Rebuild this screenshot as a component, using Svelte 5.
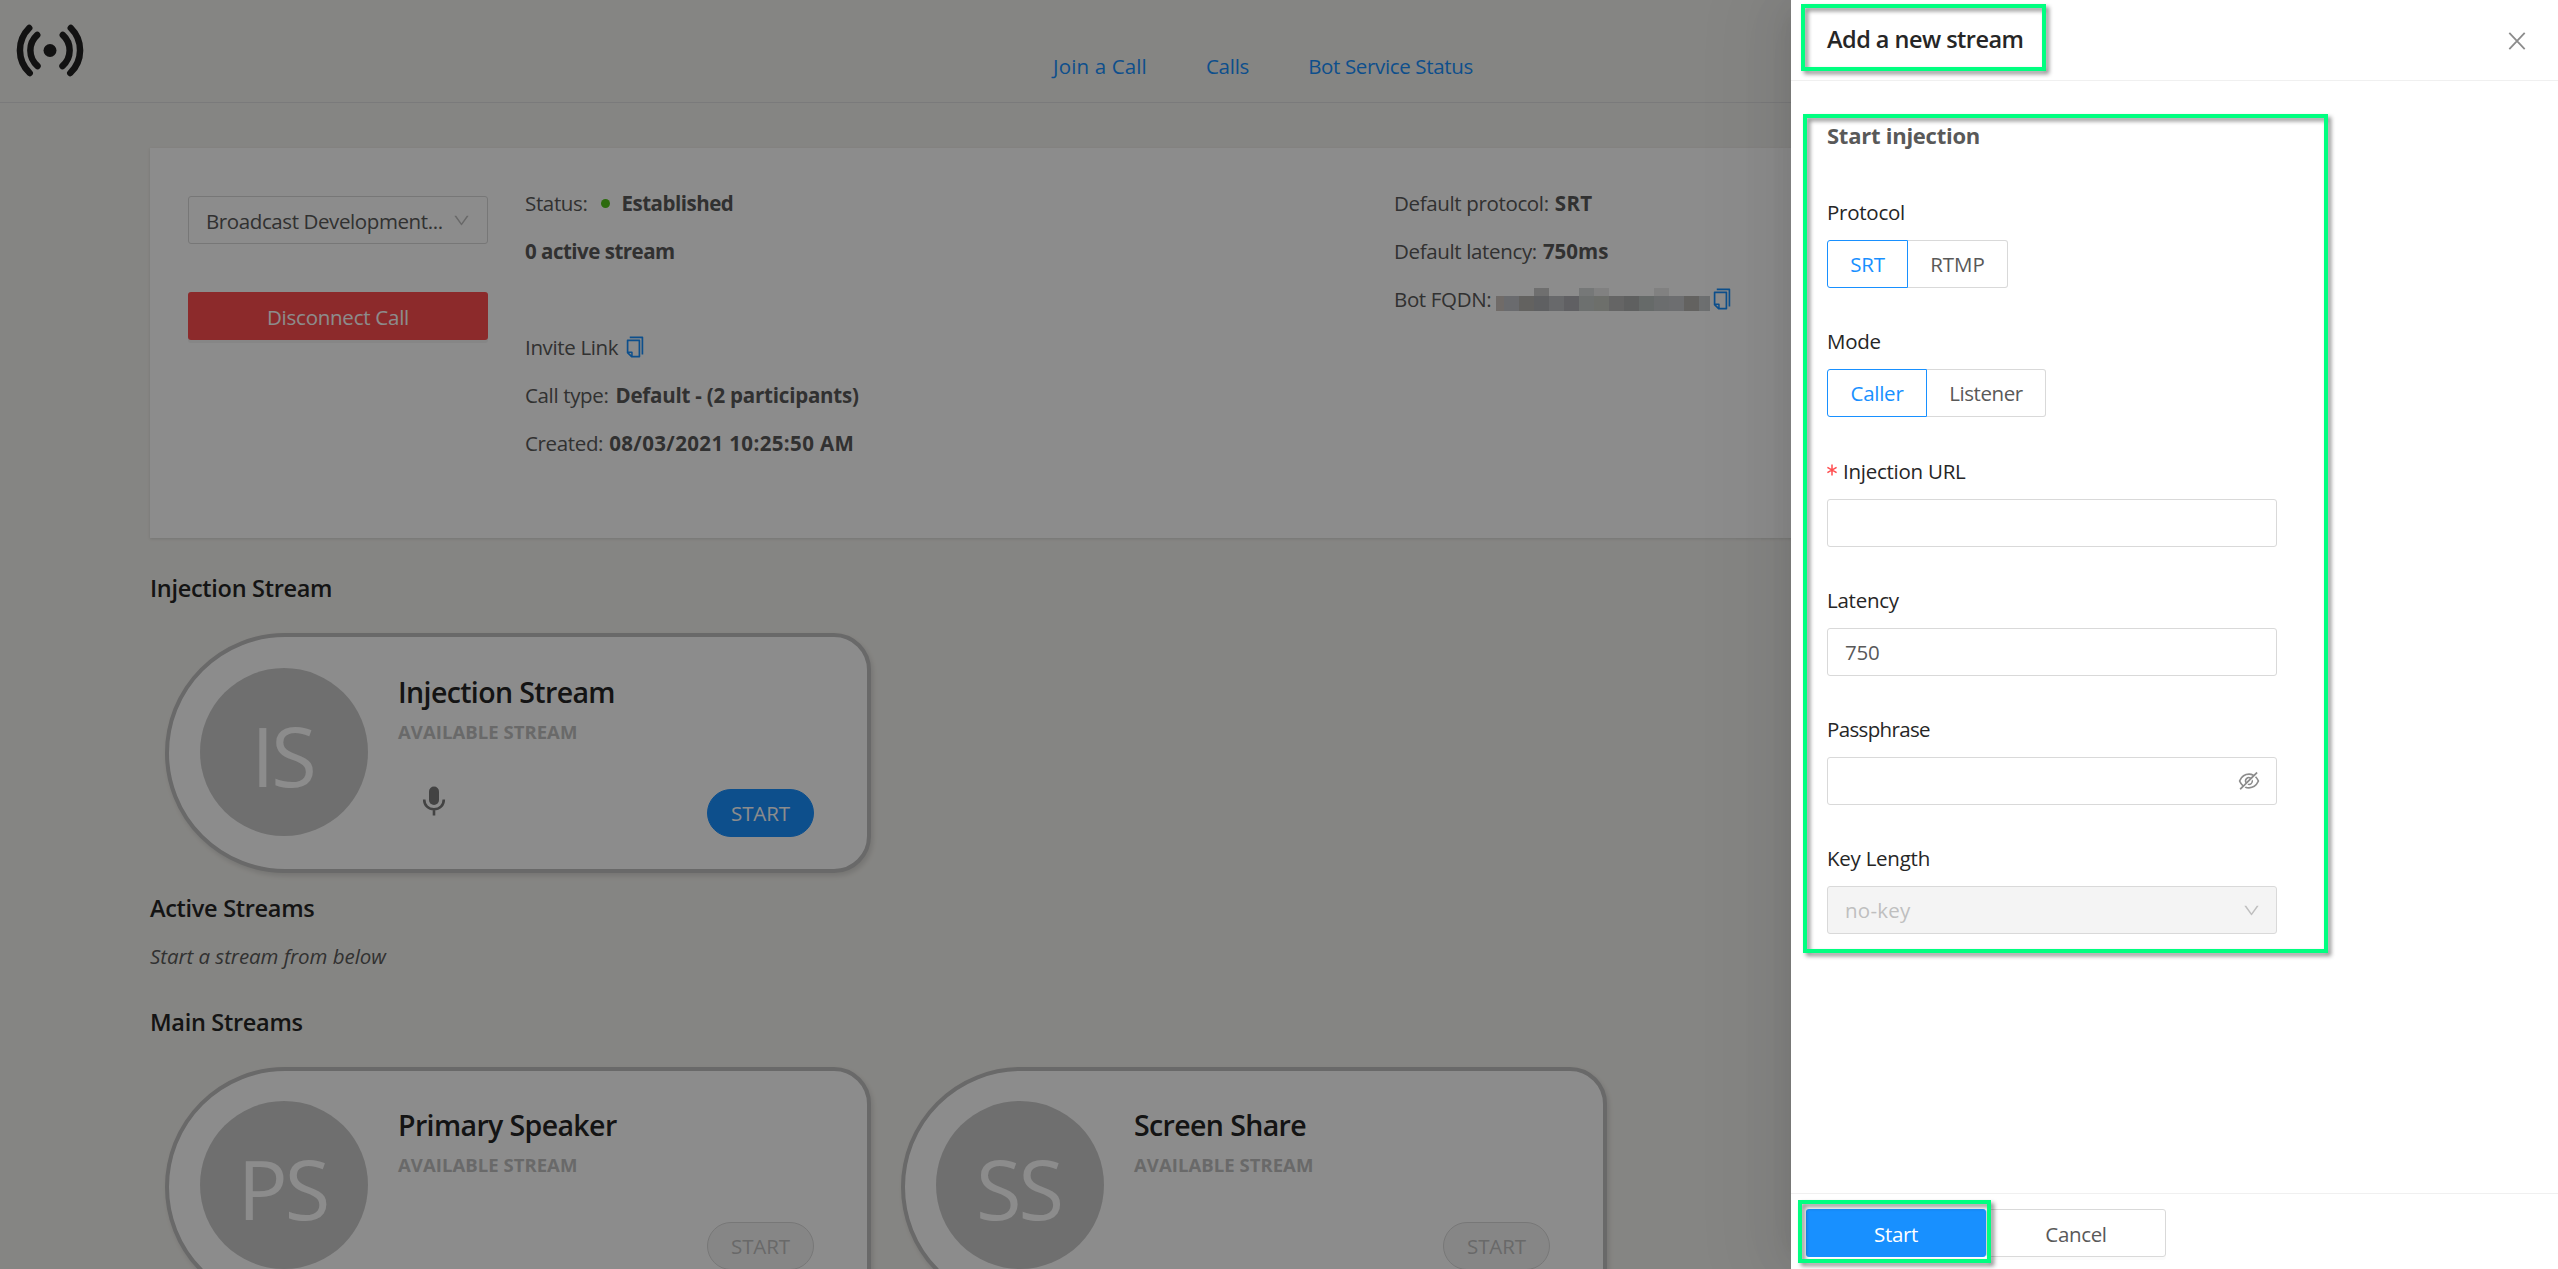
<script>
  const infoLeft = [
    { label: 'Status:', value: 'Established', dot: true },
    { value: '0 active stream' },
    {},
    { label: 'Invite Link', copy: true },
    { label: 'Call type:', value: 'Default - (2 participants)', tone: 'wide' },
    { label: 'Created:', value: '08/03/2021 10:25:50 AM', tone: 'digits' }
  ];
  const mosaic = [
    ['#706b68', 8], ['#6a6c6e', 15], ['#636261', 15], ['#5f6162', 15, '#6f6f6f'], ['#68696b', 15], ['#606163', 15],
    ['#6d716f', 15, '#777878'], ['#6d6f6c', 15, '#828282'], ['#656666', 15], ['#5f6060', 15], ['#676a69', 15],
    ['#6c6d6e', 15, '#828282'], ['#6d6e70', 15], ['#636261', 15], ['#6d6f71', 11]
  ];
  const mainStreams = [
    { name: 'Primary Speaker', initials: 'PS' },
    { name: 'Screen Share', initials: 'SS' }
  ];
</script>

{#snippet copyIcon()}
  <svg class="copy" viewBox="0 0 1024 1024"><path d="M832 64H296c-4.400 0-8 3.600-8 8v56c0 4.400 3.600 8 8 8h496v688c0 4.400 3.600 8 8 8h56c4.400 0 8-3.600 8-8V96c0-17.700-14.300-32-32-32zM704 192H192c-17.700 0-32 14.300-32 32v530.700c0 8.500 3.400 16.600 9.400 22.600l173.300 173.300c2.200 2.200 4.700 4 7.400 5.500v1.900h4.200c3.500 1.300 7.200 2 11 2H704c17.700 0 32-14.300 32-32V224c0-17.700-14.300-32-32-32zM350 856.200L263.900 770H350v86.200zM664 888H414V746c0-22.100-17.900-40-40-40H232V264h432v624z" /></svg>
{/snippet}

{#snippet downIcon()}
  <svg class="down" viewBox="0 0 1024 1024"><path d="M884 256h-75c-5.100 0-9.900 2.500-12.900 6.600L512 654.200 227.900 262.600c-3-4.100-7.800-6.600-12.900-6.600h-75c-6.500 0-10.300 7.400-6.500 12.700l352.600 486.100c12.800 17.600 39 17.600 51.700 0l352.600-486.100c3.900-5.300.1-12.700-6.400-12.700z" /></svg>
{/snippet}

{#snippet streamCard(name, initials, active)}
  <article class="stream" class:active>
    <div class="avatar"><span>{initials}</span></div>
    <div class="detail">
      <h3>{name}</h3>
      <p>AVAILABLE STREAM</p>
      <div class="actions">
        {#if active}
          <svg class="mic" viewBox="0 0 24 30">
            <rect x="7" y="0.500" width="10" height="18.500" rx="5" />
            <path d="M2.200 13.500c0 6 4.300 9.700 9.800 9.700s9.800-3.700 9.800-9.700M12 23.500v6" />
          </svg>
        {/if}
        <button class="pill">START</button>
      </div>
    </div>
  </article>
{/snippet}

<div class="app">
  <header>
    <svg class="logo" viewBox="0 0 68 54">
      <circle cx="34" cy="26.500" r="6.500" />
      <path d="M21.200 11a20.700 20.700 0 0 0 .3 31M46.800 11a20.700 20.700 0 0 1-.3 31M13.200 4a31.400 31.400 0 0 0 .5 45M54.800 4a31.400 31.400 0 0 1-.5 45" />
    </svg>
    <nav>
      <span class="join">Join a Call</span>
      <span>Calls</span>
      <span class="bot">Bot Service Status</span>
    </nav>
  </header>

  <main>
    <section class="call">
      <div class="controls">
        <div class="select"><span>Broadcast Development...</span>{@render downIcon()}</div>
        <button class="danger">Disconnect Call</button>
      </div>
      <div class="info left">
        {#each infoLeft as row}
          <div class="row">
            {#if row.label}<span>{row.label}</span>{/if}
            {#if row.dot}<i class="dot"></i>{/if}
            {#if row.value}<b class={row.tone}>{row.value}</b>{/if}
            {#if row.copy}{@render copyIcon()}{/if}
          </div>
        {/each}
      </div>
      <div class="info">
        <div class="row"><span>Default protocol:</span><b class="digits">SRT</b></div>
        <div class="row"><span>Default latency:</span><b class="ms">750ms</b></div>
        <div class="row fqdn">
          <span>Bot FQDN:</span>
          <div class="mosaic">
            {#each mosaic as [color, width, top]}
              <div style:width="{width}px">
                <i style:background={top ?? 'transparent'}></i><i class="low" style:background={color}></i>
              </div>
            {/each}
          </div>
          {@render copyIcon()}
        </div>
      </div>
    </section>

    <h2>Injection Stream</h2>
    <div class="streams">{@render streamCard('Injection Stream', 'IS', true)}</div>
    <h2 class="active-title">Active Streams</h2>
    <p class="hint">Start a stream from below</p>
    <h2 class="main-title">Main Streams</h2>
    <div class="streams">
      {#each mainStreams as s}{@render streamCard(s.name, s.initials, false)}{/each}
    </div>
  </main>

  <div class="mask"></div>

  <aside>
    <div class="head">
      <h2>Add a new stream</h2>
      <svg class="close" viewBox="0 0 18 18"><path d="M1.300 0.800 16.700 17.200M16.700 0.800 1.300 17.200" /></svg>
    </div>
    <form>
      <h4>Start injection</h4>
      <div class="field">
        <span class="label">Protocol</span>
        <div class="radio"><span class="on srt">SRT</span><span class="rtmp">RTMP</span></div>
      </div>
      <div class="field mode">
        <span class="label">Mode</span>
        <div class="radio"><span class="on caller">Caller</span><span class="listener">Listener</span></div>
      </div>
      <div class="field">
        <span class="label"><svg class="star" viewBox="0 0 10 12"><path d="M5 .5v11M.4 3.300l9.200 5.400M9.600 3.300.4 8.700" /></svg>Injection URL</span>
        <div class="input"></div>
      </div>
      <div class="field">
        <span class="label">Latency</span>
        <div class="input"><span>750</span></div>
      </div>
      <div class="field">
        <span class="label pass">Passphrase</span>
        <div class="input">
          <span></span>
          <svg class="eye" viewBox="0 0 1024 1024"><path d="M942.200 486.200Q889.470 375.110 816.700 305l-50.880 50.880C807.310 395.530 843.450 447.400 874.700 512 791.500 684.200 673.400 766 512 766q-72.670 0-133.870-22.380L323 798.750Q408 838 512 838q288.300 0 430.200-300.300a60.290 60.290 0 0 0 0-51.500zm-63.570-320.640L836 122.880a8 8 0 0 0-11.320 0L715.310 232.200Q624.860 186 512 186q-288.300 0-430.200 300.300a60.300 60.300 0 0 0 0 51.500q56.690 119.400 136.500 191.410L112.480 835a8 8 0 0 0 0 11.310L155.170 889a8 8 0 0 0 11.310 0l712.150-712.120a8 8 0 0 0 0-11.320zM149.300 512C232.600 339.800 350.700 258 512 258c54.540 0 104.130 9.360 149.120 28.390l-70.300 70.300a176 176 0 0 0-238.130 238.130l-83.420 83.420C223.100 637.490 183.300 582.280 149.300 512zm246.700 0a112.110 112.110 0 0 1 146.200-106.690L401.310 546.200A112 112 0 0 1 396 512z" /><path d="M508 624c-3.460 0-6.870-.16-10.250-.47l-52.820 52.820a176.090 176.090 0 0 0 227.420-227.420l-52.820 52.820c.31 3.380.47 6.790.47 10.250a111.940 111.940 0 0 1-112 112z" /></svg>
        </div>
      </div>
      <div class="field">
        <span class="label">Key Length</span>
        <div class="input disabled"><span>no-key</span>{@render downIcon()}</div>
      </div>
    </form>
    <footer><button class="primary">Start</button><button class="plain">Cancel</button></footer>
  </aside>

  <div class="mark title-mark"></div>
  <div class="mark form-mark"></div>
  <div class="mark start-mark"></div>
</div>

<style>
  :global(body) { overflow: hidden; }
  .app {
    position: relative; width: 2558px; height: 1269px; overflow: hidden; box-sizing: border-box;
    background: #f3f2ee; color: #595959;
    font: 20.5px/33px "Open Sans", "Noto Sans", sans-serif; letter-spacing: -0.25px;
  }
  .app :global(*) { box-sizing: border-box; }
  h2, h3, h4, p { margin: 0; }
  button { font: inherit; letter-spacing: inherit; padding: 0; border: 0; }
  svg { display: block; flex: none; }

  header { height: 103px; border-bottom: 1px solid #dfdfe0; display: flex; align-items: flex-start; padding: 24px 0 0 16px; }
  .logo { width: 68px; height: 54px; fill: #222; }
  .logo path { fill: none; stroke: #222; stroke-width: 6.500; stroke-linecap: round; }
  nav { display: flex; gap: 59px; margin: 26px 0 0 969px; color: #1890ff; white-space: nowrap; }
  .join { letter-spacing: 0.15px; }
  .bot { letter-spacing: -0.35px; }

  main { padding: 45px 0 0 150px; }
  .call {
    height: 390px; width: 2258px; background: #fff; padding: 31px 38px; display: flex;
    box-shadow: 0 1px 3px rgba(0, 0, 0, .12);
  }
  .controls { width: 300px; padding-top: 17px; display: flex; flex-direction: column; gap: 48px; }
  .select {
    height: 48px; border: 1px solid #d9d9d9; border-radius: 3px; display: flex; align-items: center;
    justify-content: space-between; padding: 0 16px 0 17px; letter-spacing: -0.4px;
  }
  .select span { padding-top: 2px; }
  .down { width: 19px; height: 19px; fill: #bfbfbf; }
  .danger { height: 48px; border-radius: 3px; background: #ff4d4f; color: #fff; box-shadow: 0 3px 0 rgba(0, 0, 0, .045); padding-top: 2px; }
  .info.left { margin-left: 37px; width: 869px; }
  .row { height: 48px; display: flex; align-items: center; white-space: nowrap; gap: 6px; letter-spacing: -0.35px; }
  .row b { letter-spacing: -0.5px; }
  .row b.wide { letter-spacing: -0.22px; margin-left: 1px; }
  .row b.digits { letter-spacing: 0.37px; }
  .row b.ms { letter-spacing: 0; }
  .dot { width: 9px; height: 9px; border-radius: 50%; background: #52c41a; margin: 0 6px 0 7px; }
  .copy { width: 24px; height: 24px; fill: #1890ff; margin: -1px 0 0 -1px; }
  .fqdn { gap: 5px; }
  .fqdn .copy { margin-left: -5px; }
  .mosaic { display: flex; height: 23px; width: 214px; }
  .mosaic div { display: flex; flex-direction: column; filter: brightness(1.818); }
  .mosaic i { height: 8px; }
  .mosaic .low { height: 15px; }

  h2 { font-size: 23.5px; line-height: 36px; font-weight: 600; color: #262626; letter-spacing: -0.3px; }
  main h2 { margin-top: 32px; }
  .streams { display: flex; gap: 30px; padding: 27px 0 0 15px; }
  .stream {
    width: 706px; height: 240px; border: 4px solid #bfbfbf; border-radius: 120px 37px 37px 120px; background: #fff;
    box-shadow: 2px 3px 5px rgba(0, 0, 0, .12); display: flex; padding: 30px 53px 0 31px;
  }
  .stream.active { padding-top: 31px; }
  .avatar { width: 168px; height: 168px; border-radius: 50%; background: #cbcbcb; color: #fff; display: flex; align-items: center; justify-content: center; font-size: 83px; letter-spacing: -3px; }
  .avatar span { padding: 5px 3px 0 0; }
  .detail { flex: 1; margin-left: 30px; padding-top: 3px; }
  h3 { font-size: 28.5px; line-height: 42px; font-weight: 600; color: #262626; letter-spacing: -0.62px; }
  .detail p { font-size: 18.5px; line-height: 30px; font-weight: 700; color: #c0c0c0; margin-top: 4px; letter-spacing: 0.05px; }
  .actions { display: flex; margin-top: 42px; height: 48px; padding-left: 24px; }
  .mic { width: 24px; height: 30px; margin-top: -3px; fill: #7b7b7b; }
  .mic path { fill: none; stroke: #7b7b7b; stroke-width: 2.600; }
  .pill { margin-left: auto; width: 107px; height: 48px; border-radius: 24px; border: 1px solid #d9d9d9; background: #f5f5f5; color: #bfbfbf; letter-spacing: -0.1px; padding-top: 1px; }
  .active .pill { background: #1890ff; border-color: #1890ff; color: #fff; }
  main .active-title { margin-top: 17px; }
  main .main-title { margin-top: 31px; }
  .hint { font-style: italic; margin-top: 14px; letter-spacing: -0.05px; }

  .mask { position: absolute; inset: 0; background: rgba(0, 0, 0, .45); }

  aside {
    position: absolute; top: 0; right: 0; bottom: 0; width: 767px; background: #fff; display: flex; flex-direction: column;
    box-shadow: -9px 0 24px -12px rgba(0, 0, 0, .08), -14px 0 42px rgba(0, 0, 0, .05), -18px 0 72px 24px rgba(0, 0, 0, .03);
  }
  .head { height: 81px; border-bottom: 1px solid #f0f0f0; display: flex; align-items: center; justify-content: space-between; padding: 0 32px 2px 36px; }
  .head h2 { letter-spacing: -0.52px; }
  .close { width: 18px; height: 18px; margin-top: 3px; fill: none; stroke: #8c8c8c; stroke-width: 1.800; }
  form { flex: 1; padding: 36px 36px 0; }
  h4 { font-size: 22px; line-height: 36px; font-weight: 700; letter-spacing: -0.25px; }
  .field { height: 129px; width: 450px; }
  .mode { height: 130px; }
  h4 + .field { margin-top: 43px; }
  .label { display: flex; align-items: center; height: 33px; margin-bottom: 11px; color: #262626; white-space: nowrap; }
  .pass { letter-spacing: -0.65px; }
  .star { width: 10px; height: 12px; margin: -3px 6px 0 0; fill: none; stroke: #ff4d4f; stroke-width: 1.500; }
  .radio { display: flex; height: 48px; }
  .radio span { border: 1px solid #d9d9d9; border-left: 0; border-radius: 0 3px 3px 0; display: flex; align-items: center; justify-content: center; padding-top: 1px; }
  .radio .on { border: 1px solid #1890ff; border-radius: 3px 0 0 3px; color: #1890ff; }
  .srt { width: 81px; } .rtmp { width: 100px; letter-spacing: 0; }
  .caller { width: 100px; } .listener { width: 119px; letter-spacing: -0.45px; }
  .input { height: 48px; border: 1px solid #d9d9d9; border-radius: 3px; display: flex; align-items: center; justify-content: space-between; padding: 0 15px 0 17px; }
  .input span { padding-top: 1px; }
  .disabled { background: #f4f4f4; color: #bfbfbf; letter-spacing: 0.25px; }
  .eye { width: 24px; height: 24px; fill: #8c8c8c; }
  footer { height: 76px; border-top: 1px solid #f0f0f0; padding: 15px; display: flex; }
  footer button { width: 180px; height: 48px; border-radius: 3px; padding-top: 2px; letter-spacing: -0.35px; }
  .primary { background: #1890ff; color: #fff; }
  .plain { background: #fff; border: 1px solid #d9d9d9; color: #595959; box-shadow: 0 3px 0 rgba(0, 0, 0, .016); }

  .mark { position: absolute; border: 4px solid #00ff80; filter: drop-shadow(3px 3px 2px rgba(0, 0, 0, .45)); }
  .title-mark { left: 1801px; top: 4px; width: 245px; height: 67px; }
  .form-mark { left: 1803px; top: 114px; width: 525px; height: 839px; }
  .start-mark { left: 1798px; top: 1200px; width: 193px; height: 63px; }
</style>
